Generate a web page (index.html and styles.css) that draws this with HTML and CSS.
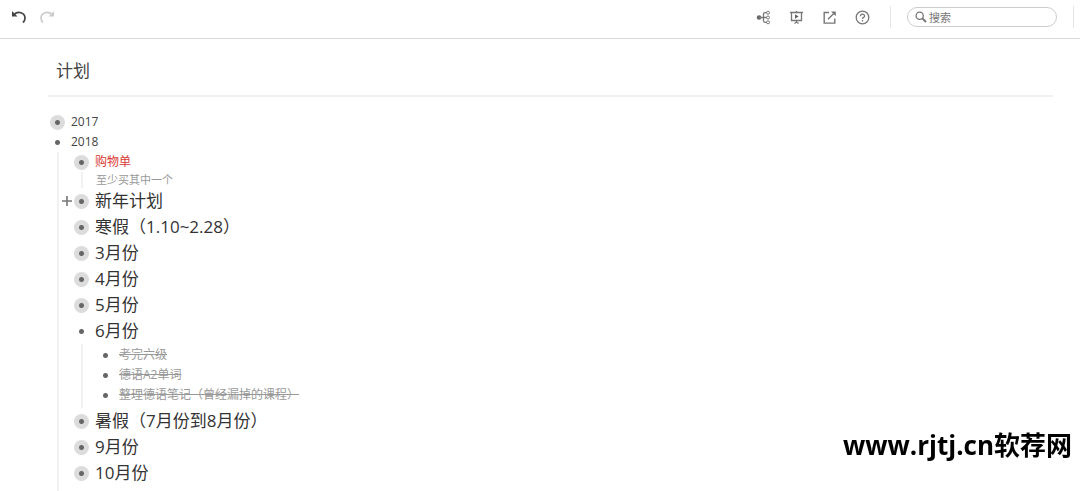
FILE: index.html
```html
<!DOCTYPE html>
<html lang="zh-CN">
<head>
    <meta charset="UTF-8">
    <meta name="viewport" content="width=device-width, initial-scale=1.0">
    <title>计划</title>
    <link rel="stylesheet" href="styles.css">
</head>
<body>
    <header class="toolbar">
        <div class="history">
            <button type="button" aria-label="撤销">
                <svg width="16" height="16" viewBox="0 0 16 16"><path d="M3 5.6C7 1.6 14 3.6 14 9.2c0 1.8-.8 3.2-2 4.3" fill="none" stroke="#444" stroke-width="1.7"/><path d="M1 2v5.5h5.5z" fill="#444"/></svg>
            </button>
            <button type="button" aria-label="重做" disabled>
                <svg width="16" height="16" viewBox="0 0 16 16"><path d="M13 5.6C9 1.6 2 3.6 2 9.2c0 1.8.8 3.2 2 4.3" fill="none" stroke="#ccc" stroke-width="1.7"/><path d="M15 2v5.5H9.5z" fill="#ccc"/></svg>
            </button>
        </div>
        <div class="actions">
            <button type="button" aria-label="思维导图">
                <svg width="15" height="15" viewBox="0 0 15 15" fill="none" stroke="#777"><circle cx="3" cy="7.5" r="2.2" fill="#666" stroke="none"/><path d="M3 7.5h7.5M10.5 2.7H9Q7.5 2.7 7.5 4.2v6.6Q7.5 12.3 9 12.3h1.5" stroke-width="1.3"/><circle cx="12" cy="2.7" r="1.5"/><circle cx="12" cy="7.5" r="1.5"/><circle cx="12" cy="12.3" r="1.5"/></svg>
            </button>
            <button type="button" aria-label="演示">
                <svg width="15" height="15" viewBox="0 0 15 15" fill="none" stroke="#777" stroke-width="1.3"><path d="M1 2.5h13M2.5 2.5v8h10v-8M7.5 1v1.5M7.5 10.5v1.5M5.5 13.5l2-1.5 2 1.5"/><path d="M6 4.3v4.4l3.7-2.2z" fill="#666" stroke="none"/></svg>
            </button>
            <button type="button" aria-label="分享">
                <svg width="15" height="15" viewBox="0 0 15 15" fill="none" stroke="#777" stroke-width="1.4"><path d="M7 2.5H2.2v10.6h10.6V8.5M6 9.2l6.5-6.5"/><path d="M9 1.5h4.8v4.8z" fill="#777" stroke="none"/></svg>
            </button>
            <button type="button" aria-label="帮助">
                <svg width="15" height="15" viewBox="0 0 15 15" fill="none" stroke="#777" stroke-width="1.3"><circle cx="7.5" cy="7.5" r="6.3"/><path d="M5.5 6.2c0-2.7 4.1-2.6 4.1-.2 0 1.4-2.1 1.4-2.1 3M7.5 10v1.4"/></svg>
            </button>
        </div>
        <label class="search">
            <svg width="12" height="12" viewBox="0 0 12 12" fill="none" stroke="#777"><circle cx="4.7" cy="4.7" r="3.6" stroke-width="1.3"/><path d="M7.4 7.4l3.6 3.6" stroke-width="2"/></svg>
            <input type="text" placeholder="搜索" aria-label="搜索">
        </label>
    </header>

    <main>
        <h1>计划</h1>
        <ul class="outline">
            <li><div class="row"><span class="dot folded"></span>2017</div></li>
            <li>
                <div class="row"><span class="dot"></span>2018</div>
                <ul>
                    <li>
                        <div class="row red"><span class="dot folded"></span>购物单</div>
                        <p class="note">至少买其中一个</p>
                    </li>
                    <li>
                        <div class="row big">
                            <button type="button" class="expand" aria-label="展开"><svg width="10" height="10" viewBox="0 0 10 10"><path d="M5 0v10M0 5h10" stroke="#777" stroke-width="1.6"/></svg></button>
                            <span class="dot folded"></span>新年计划
                        </div>
                    </li>
                    <li><div class="row big"><span class="dot folded"></span>寒假（1.10~2.28）</div></li>
                    <li><div class="row big"><span class="dot folded"></span>3月份</div></li>
                    <li><div class="row big"><span class="dot folded"></span>4月份</div></li>
                    <li><div class="row big"><span class="dot folded"></span>5月份</div></li>
                    <li>
                        <div class="row big"><span class="dot"></span>6月份</div>
                        <ul class="done">
                            <li><div class="row"><span class="dot"></span><s>考完六级</s></div></li>
                            <li><div class="row"><span class="dot"></span><s>德语A2单词</s></div></li>
                            <li><div class="row"><span class="dot"></span><s>整理德语笔记（曾经漏掉的课程）</s></div></li>
                        </ul>
                    </li>
                    <li><div class="row big"><span class="dot folded"></span>暑假（7月份到8月份）</div></li>
                    <li><div class="row big"><span class="dot folded"></span>9月份</div></li>
                    <li><div class="row big"><span class="dot folded"></span>10月份</div></li>
                </ul>
            </li>
        </ul>
    </main>

    <div class="watermark">www.rjtj.cn软荐网</div>
</body>
</html>
```

FILE: styles.css
```css
* {
    box-sizing: border-box;
    margin: 0;
    padding: 0;
}

body {
    font-family: "Open Sans", "Noto Sans CJK SC", sans-serif;
    font-size: 12px;
    line-height: 20px;
    color: #444;
    background: #fff;
}

button {
    border: 0;
    background: none;
}

svg {
    display: block;
}

ul {
    list-style: none;
}

.toolbar {
    display: flex;
    align-items: center;
    height: 39px;
    padding: 0 6px 4px 11px;
    border-bottom: 1px solid #d8d8d8;
}

.history {
    display: flex;
    gap: 12px;
    margin-right: auto;
}

.actions {
    display: flex;
    align-items: center;
    gap: 18px;
    height: 22px;
    padding-right: 20px;
    border-right: 1px solid #e6e6e6;
}

.search {
    position: relative;
    padding: 1px 16px;
    border-right: 1px solid #e6e6e6;
}

.search svg {
    position: absolute;
    left: 24px;
    top: 5px;
}

.search input {
    display: block;
    width: 150px;
    height: 20px;
    padding: 1px 10px 0 21px;
    border: 1px solid #ccc;
    border-radius: 10px;
    font: inherit;
    font-size: 11px;
}

.search input::placeholder {
    color: #777;
}

main {
    padding: 20px 27px 0 48px;
}

h1 {
    padding: 0 8px 12px;
    border-bottom: 2px solid #f2f2f2;
    font-size: 17px;
    font-weight: normal;
    line-height: 24px;
}

.outline {
    padding: 15px 0 0 2px;
}

.outline ul {
    margin-left: 7px;
    padding: 0 0 5px 15px;
    border-left: 2px solid #f2f2f2;
}

.row {
    position: relative;
    display: flex;
    align-items: center;
    gap: 6px;
    height: 20px;
}

.big {
    height: 26px;
    font-size: 17px;
    color: #333;
}

.red {
    color: #d93a35;
}

.dot {
    width: 15px;
    height: 15px;
    border-radius: 50%;
    background: radial-gradient(circle, #666 2px, transparent 3px);
}

.folded {
    background-color: #dcdcdc;
}

.note {
    margin-left: 7px;
    padding-left: 13px;
    border-left: 2px solid #f2f2f2;
    font-size: 11px;
    line-height: 16px;
    color: #999;
}

.expand {
    position: absolute;
    left: -12px;
}

.outline .done {
    padding-top: 1px;
    padding-bottom: 3px;
    color: #999;
}

.watermark {
    position: fixed;
    right: 8px;
    bottom: 28px;
    font-size: 26px;
    font-weight: bold;
    line-height: 36px;
    color: #000;
}
```
